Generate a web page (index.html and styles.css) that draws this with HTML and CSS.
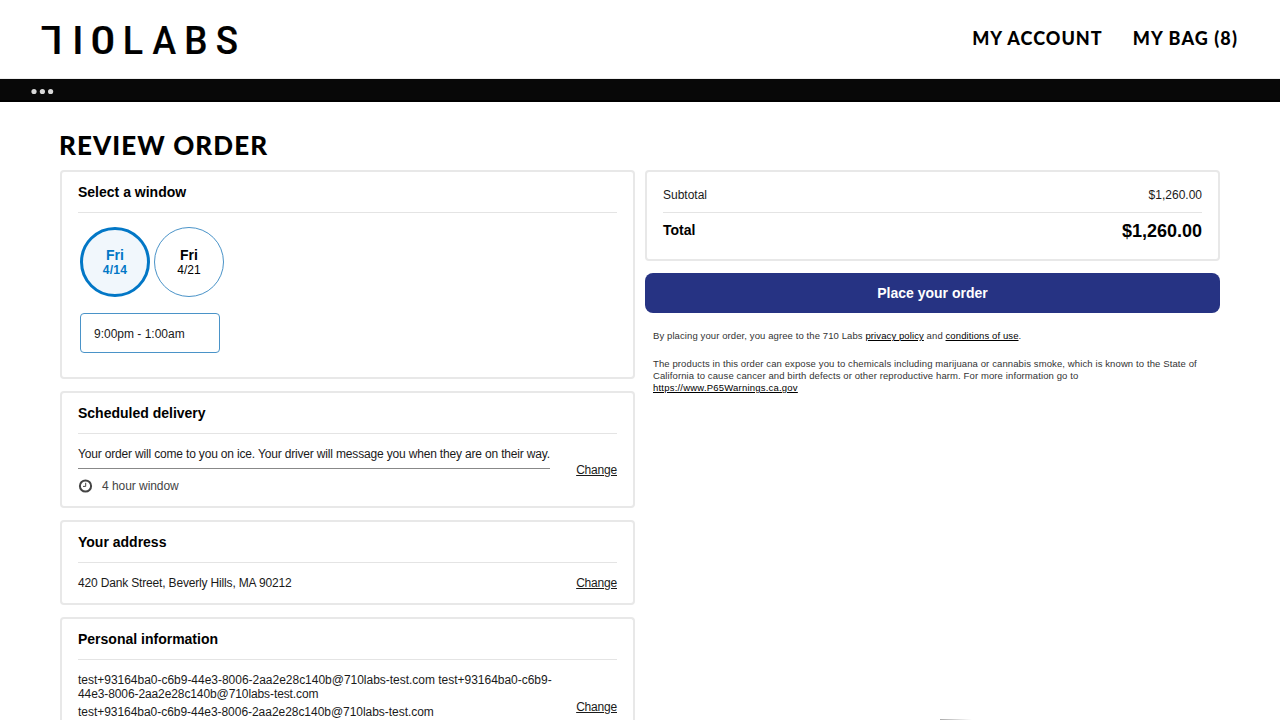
FILE: index.html
```html
<!DOCTYPE html>
<html lang="en">
<head>
<meta charset="utf-8">
<title>Review order</title>
<link rel="stylesheet" href="styles.css">
</head>
<body>
<header class="header">
  <svg class="logo" width="200" height="34" viewBox="0 0 200 34" role="img" aria-label="710 Labs">
    <g class="logo-text">
      <text transform="translate(22.3 3.5) rotate(180)">L</text>
      <text x="32.3" y="31.5">I</text>
      <text transform="translate(50.6 31.5) scale(1.1 1)">0</text>
      <text transform="translate(82.8 31.5) scale(.95 1)">L</text>
      <text transform="translate(112.5 31.5) scale(.9 1)">A</text>
      <text transform="translate(144.3 31.5) scale(.93 1)">B</text>
      <text transform="translate(175.8 31.5) scale(.93 1)">S</text>
    </g>
  </svg>
  <nav class="nav"><a class="nav-account">MY ACCOUNT</a><a class="nav-bag">MY BAG (8)</a></nav>
</header>
<div class="strip"><svg width="24" height="8" viewBox="0 0 24 8"><g class="dots"><circle cx="3" cy="4.5" r="2.6"/><circle cx="11.4" cy="4.5" r="2.6"/><circle cx="19.6" cy="4.5" r="2.6"/></g></svg></div>
<main class="page">
  <h1 class="title">REVIEW ORDER</h1>
  <div class="columns">
    <div class="column">
      <section class="card card-window">
        <h2 class="card-title">Select a window</h2>
        <div class="days">
          <div class="day day-selected"><b>Fri</b><span>4/14</span></div>
          <div class="day"><b>Fri</b><span>4/21</span></div>
        </div>
        <div class="slot">9:00pm - 1:00am</div>
      </section>
      <section class="card card-delivery">
        <h2 class="card-title">Scheduled delivery</h2>
        <div class="row">
          <div class="delivery">
            <p class="delivery-note">Your order will come to you on ice. Your driver will message you when they are on their way.</p>
            <p class="delivery-time"><svg class="clock" width="15" height="15" viewBox="0 0 15 15"><circle cx="7.5" cy="7" r="5.6"/><path class="hand" d="M7.7 3.8v3.6H5"/></svg><span>4 hour window</span></p>
          </div>
          <a class="change">Change</a>
        </div>
      </section>
      <section class="card card-address">
        <h2 class="card-title">Your address</h2>
        <div class="row"><p class="address">420 Dank Street, Beverly Hills, MA 90212</p><a class="change">Change</a></div>
      </section>
      <section class="card card-personal">
        <h2 class="card-title">Personal information</h2>
        <div class="row">
          <div class="personal">
            <p class="name">test+93164ba0-c6b9-44e3-8006-2aa2e28c140b@710labs-test.com test+93164ba0-c6b9-<br><span class="name-end">44e3-8006-2aa2e28c140b@710labs-test.com</span></p>
            <p class="email">test+93164ba0-c6b9-44e3-8006-2aa2e28c140b@710labs-test.com</p>
          </div>
          <a class="change">Change</a>
        </div>
      </section>
    </div>
    <div class="column column-summary">
      <section class="card card-total">
        <div class="subtotal"><span>Subtotal</span><span>$1,260.00</span></div>
        <div class="total"><span>Total</span><span class="amount">$1,260.00</span></div>
      </section>
      <button class="order">Place your order</button>
      <div class="legal">
        <p class="terms">By placing your order, you agree to the 710 Labs <u>privacy policy</u> and <u>conditions of use</u>.</p>
        <p>The products in this order can expose you to chemicals including marijuana or cannabis smoke, which is known to the State of<br>California to cause cancer and birth defects or other reproductive harm. For more information go to<br><u class="url">https://www.P65Warnings.ca.gov</u></p>
      </div>
      <div class="edge"></div>
    </div>
  </div>
</main>
</body>
</html>
```
FILE: styles.css
```css
* { box-sizing: border-box; }
body { margin: 0; height: 720px; overflow: hidden; display: flex; flex-direction: column; background: #fff; color: #000; font: 12px/14px "Liberation Sans", Arial, sans-serif; }
p, h1, h2 { margin: 0; }
.header { flex: none; height: 79px; padding: 0 42px 0 40px; display: flex; justify-content: space-between; border-bottom: 1px solid #eee; }
.logo { margin-top: 22px; overflow: visible; }
.logo-text { font: 500 39.5px Roboto, sans-serif; stroke: #000; stroke-width: .2; }
.nav { display: flex; gap: 30px; padding-top: 26px; font: 900 18px/24px Lato, sans-serif; }
.nav-account { letter-spacing: 1.05px; }
.nav-bag { letter-spacing: 1.1px; }
.strip { flex: none; height: 23px; background: #080808; border-bottom: 2px solid #000; display: flex; align-items: center; padding: 3px 0 0 31px; }
.dots { fill: #d8d8d8; }
.page { flex: 1; min-height: 0; overflow: hidden; padding: 26px 60px 0; display: flex; flex-direction: column; }
.title { flex: none; height: 42px; font: 900 26px/35px Lato, sans-serif; letter-spacing: 1.1px; margin-left: -1px; }
.columns { flex: 1; min-height: 0; display: grid; grid-template-columns: 575px 575px; grid-template-rows: 550px; gap: 10px; }
.column { display: flex; flex-direction: column; min-height: 0; }
.card { flex: none; border: 2px solid #e8e8e8; border-radius: 4px; padding: 0 16px; margin-bottom: 12px; }
.card-title { height: 41px; border-bottom: 1px solid #e4e4e4; font-size: 14px; line-height: 40px; }
.card-window { height: 209px; }
.days { display: flex; gap: 4px; padding: 14px 2px 16px; }
.day { width: 70px; height: 70px; border: 1px solid #4a93c8; border-radius: 50%; display: flex; flex-direction: column; align-items: center; justify-content: center; }
.day b { font-size: 14px; line-height: 15px; }
.day-selected { border: 3px solid #0277c6; background: #f1f7fc; color: #0277c6; font-weight: bold; }
.day-selected span { letter-spacing: .3px; }
.slot { width: 140px; height: 40px; margin-left: 2px; padding-left: 13px; border: 1px solid #4a93c8; border-radius: 4px; line-height: 41px; color: #1a1a1a; }
.row { display: flex; justify-content: space-between; align-items: center; color: #1a1a1a; }
.change { text-decoration: underline; letter-spacing: -.2px; }
.card-delivery { height: 116.5px; }
.card-delivery .change { padding-top: 2px; }
.delivery-note { height: 35px; border-bottom: 1px solid #888; line-height: 41px; letter-spacing: -.17px; }
.delivery-time { display: flex; align-items: center; gap: 9px; color: #444; height: 34px; letter-spacing: -.05px; }
.clock { fill: none; stroke: #444; stroke-width: 2; }
.hand { stroke-width: 1; }
.card-address { height: 85.5px; }
.card-address .row { height: 40px; }
.address { letter-spacing: -.165px; }
.card-personal { flex: 1 0 0; border-bottom: 0; border-radius: 4px 4px 0 0; margin-bottom: 0; overflow: hidden; }
.card-personal .row { padding-top: 13px; }
.card-personal .change { padding-top: 22px; }
.name { letter-spacing: -.02px; }
.name-end { letter-spacing: -.1px; }
.email { margin-top: 4px; letter-spacing: -.04px; }
.card-total { height: 91px; }
.subtotal { height: 41px; border-bottom: 1px solid #e4e4e4; padding-top: 16px; display: flex; justify-content: space-between; color: #1a1a1a; }
.total { display: flex; justify-content: space-between; align-items: center; height: 36px; font-size: 14px; font-weight: bold; }
.total span:first-child { padding-bottom: 2px; }
.amount { font-size: 18px; }
.order { flex: none; width: 100%; height: 40px; border: 0; border-radius: 8px; background: #263383; color: #fff; font: bold 14px "Liberation Sans", sans-serif; }
.legal { padding: 17px 8px; font-size: 9.5px; line-height: 12px; color: #333; letter-spacing: .11px; }
.legal u { color: #000; }
.terms { margin-bottom: 16px; letter-spacing: .1px; }
.legal .url { letter-spacing: .21px; }
.edge { width: 32px; height: 1px; margin: auto 0 0 295px; background: linear-gradient(90deg, #aaa, #fff); }
```
